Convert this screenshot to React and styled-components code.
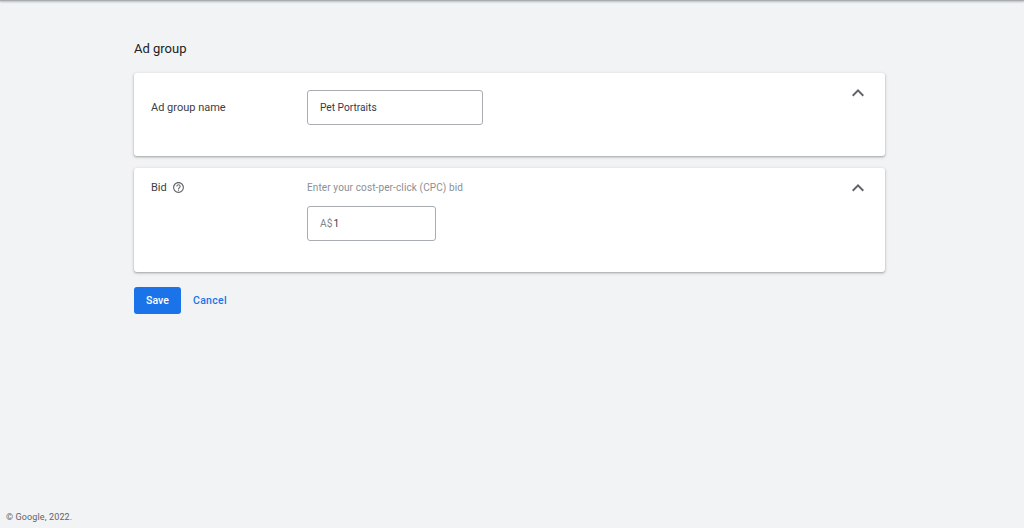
import styled, { createGlobalStyle } from 'styled-components';
import { MdHelpOutline, MdExpandLess } from 'react-icons/md';

const GlobalStyle = createGlobalStyle`
  html, body {
    margin: 0;
    background-color: #f1f3f4;
    font-family: Roboto, "Liberation Sans", sans-serif;
  }
`;

const Page = styled.div`
  height: 528px;
  display: flex;
  flex-direction: column;
  overflow: hidden;
`;

const TopBar = styled.div`
  height: 1px;
  flex-shrink: 0;
  background-color: #a8abaf;
  box-shadow: 0 1px 2px rgba(60, 64, 67, 0.45);
`;

const Main = styled.main`
  flex: 1;
  width: 751px;
  margin-left: 134px;
  padding-top: 39px;
`;

const Title = styled.h1`
  margin: 0 0 16px;
  font-size: 13px;
  line-height: 17px;
  font-weight: 400;
  color: #202124;
`;

const Card = styled.section`
  position: relative;
  display: grid;
  grid-template-columns: 156px 1fr;
  box-sizing: border-box;
  height: ${(props) => props.$height}px;
  margin-bottom: 12px;
  padding: ${(props) => props.$top}px 17px 0;
  background-color: #fff;
  border-radius: 3px;
  box-shadow: 0 1px 2px rgba(60, 64, 67, 0.35), 0 1px 3px 1px rgba(60, 64, 67, 0.1);
`;

const Label = styled.div`
  display: flex;
  align-items: ${(props) => (props.$center ? 'center' : 'flex-start')};
  gap: 5px;
  height: ${(props) => (props.$center ? '35px' : 'auto')};
  font-size: 11px;
  line-height: 13px;
  color: #3c4043;
`;

const Help = styled(MdHelpOutline)`
  width: 13px;
  height: 13px;
  color: #5f6368;
`;

const Hint = styled.div`
  margin-bottom: 12px;
  font-size: 10px;
  line-height: 13px;
  letter-spacing: 0.12px;
  color: #8a8f94;
`;

const Field = styled.div`
  display: flex;
  align-items: center;
  gap: 1px;
  box-sizing: border-box;
  width: ${(props) => props.$width}px;
  height: 35px;
  padding: 0 12px;
  border: 1px solid #a9acb0;
  border-radius: 3px;
  font-size: 10.2px;
  color: #2b3a55;
`;

const Prefix = styled.span`
  color: #80868b;
`;

const Collapse = styled(MdExpandLess)`
  position: absolute;
  top: ${(props) => props.$top}px;
  right: 15px;
  width: 24px;
  height: 24px;
  color: #5f6368;
`;

const Actions = styled.div`
  display: flex;
  align-items: center;
  gap: 12px;
  margin-top: 15px;
`;

const SaveButton = styled.button`
  width: 47px;
  height: 27px;
  padding: 0;
  border: none;
  border-radius: 3px;
  background-color: #1a73e8;
  color: #fff;
  font-family: inherit;
  font-size: 10.5px;
  font-weight: 500;
  letter-spacing: 0.1px;
`;

const CancelButton = styled.button`
  padding: 0;
  border: none;
  background: none;
  color: #1a73e8;
  font-family: inherit;
  font-size: 10.5px;
  font-weight: 500;
  letter-spacing: 0.3px;
`;

const Footer = styled.footer`
  padding: 0 0 5px 6px;
  font-size: 9px;
  line-height: 11px;
  letter-spacing: 0.13px;
  color: #5f6368;
`;

const App = () => {
  return (
    <Page>
      <GlobalStyle />
      <TopBar />
      <Main>
        <Title>Ad group</Title>
        <Card $height={83} $top={17}>
          <Label $center>Ad group name</Label>
          <Field $width={176}>Pet Portraits</Field>
          <Collapse $top={8} />
        </Card>
        <Card $height={104} $top={13}>
          <Label>
            Bid <Help />
          </Label>
          <div>
            <Hint>Enter your cost-per-click (CPC) bid</Hint>
            <Field $width={129}>
              <Prefix>A$</Prefix> 1
            </Field>
          </div>
          <Collapse $top={8} />
        </Card>
        <Actions>
          <SaveButton>Save</SaveButton>
          <CancelButton>Cancel</CancelButton>
        </Actions>
      </Main>
      <Footer>© Google, 2022.</Footer>
    </Page>
  );
};

export default App;
